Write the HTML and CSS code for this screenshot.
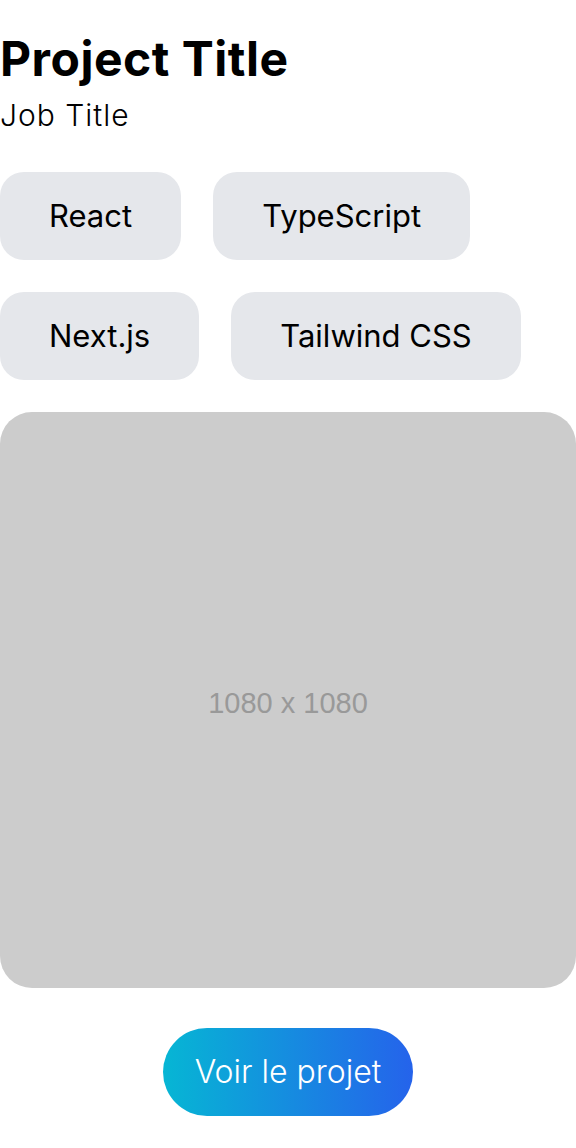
FILE: index.html
```html
<!DOCTYPE html>
<html lang="fr">
<head>
<meta charset="utf-8">
<title>Project</title>
<link rel="stylesheet" href="styles.css">
</head>
<body>
<main class="card">
  <header class="head">
    <h1 class="title">Project Title</h1>
    <p class="job">Job Title</p>
  </header>
  <ul class="tags">
    <li class="tag">React</li>
    <li class="tag">TypeScript</li>
    <li class="tag">Next.js</li>
    <li class="tag">Tailwind CSS</li>
  </ul>
  <div class="media"><span class="media-label">1080 x 1080</span></div>
  <div class="actions">
    <a class="btn" href="#">Voir le projet</a>
  </div>
</main>
</body>
</html>
```
FILE: styles.css
```css
* { box-sizing: border-box; }
html, body { margin: 0; padding: 0; background: #fff; }
body { font-family: Inter, "Noto Sans", sans-serif; color: #000; }
.card { width: 576px; padding-top: 35px; }
.head { display: flex; flex-direction: column; }
.title { margin: 0; font-size: 48px; line-height: 48px; font-weight: 700; letter-spacing: 0.5px; }
.job { margin: 14px 0 0; font-size: 30px; line-height: 36px; font-weight: 300; letter-spacing: 1px; }
.tags { list-style: none; margin: 39px 0 0; padding: 0; display: flex; flex-wrap: wrap; gap: 32px; }
.tag { background: #e5e7eb; border-radius: 24px; padding: 24px 49px; font-size: 31px; line-height: 40px; font-weight: 400; }
.media { margin-top: 32px; width: 576px; aspect-ratio: 1 / 1; background: #cccccc; border-radius: 32px; display: flex; align-items: center; justify-content: center; }
.media-label { padding-top: 6px; font-family: "Liberation Sans", Arial, sans-serif; font-size: 29px; color: #999999; }
.actions { display: flex; justify-content: center; padding: 40px 0 32px; }
.btn { display: inline-block; padding: 24px 32px; border-radius: 9999px; background: linear-gradient(to right, #06b6d4, #2563eb); color: #fff; text-decoration: none; font-size: 32px; line-height: 40px; font-weight: 300; }
```
